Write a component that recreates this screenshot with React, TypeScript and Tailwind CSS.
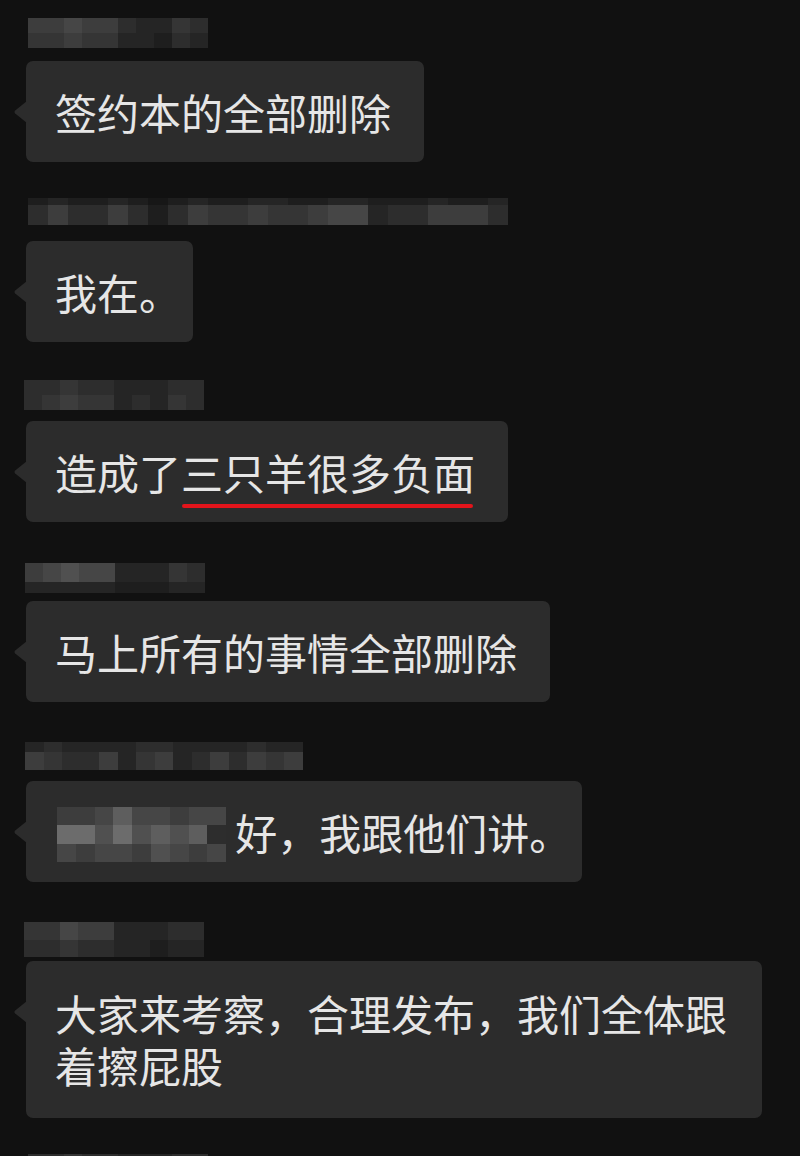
import React from "react";

// grey steps for the blurred name bars
const SHADES = [
  "bg-[#171717]",
  "bg-[#1e1e1e]",
  "bg-[#252525]",
  "bg-[#2d2d2d]",
  "bg-[#353535]",
  "bg-[#3d3d3d]",
  "bg-[#464646]",
  "bg-[#505050]",
  "bg-[#5e5e5e]",
  "bg-[#6c6c6c]",
];

type Row = { h: string; cells: string };

const Mosaic: React.FC<{ rows: Row[]; cellW: string; className?: string }> = ({
  rows,
  cellW,
  className = "",
}) => (
  <div className={`flex flex-col ${className}`}>
    {rows.map((row, i) => (
      <div key={i} className="flex">
        {row.cells.split("").map((c, j) => (
          <div key={j} className={`${cellW} ${row.h} ${SHADES[Number(c)]}`} />
        ))}
      </div>
    ))}
  </div>
);

const Tail = () => (
  <svg
    className="absolute -left-[13px] top-[40px] h-[22px] w-[14px]"
    viewBox="0 0 14 22"
  >
    <path d="M14 0 L2.2 9.6 Q0.6 11 2.2 12.4 L14 22 Z" fill="#2c2c2c" />
  </svg>
);

const Bubble: React.FC<{
  children: React.ReactNode;
  pad?: string;
  py?: string;
  size?: string;
}> = ({ children, pad = "pl-[29px] pr-[33px]", py = "pt-[26px] pb-[25px]", size = "" }) => (
  <div
    className={`relative ml-[26px] rounded-[7px] bg-[#2c2c2c] text-[42px] leading-[50px] ${py} ${pad} ${size}`}
  >
    <Tail />
    {children}
  </div>
);

const Block: React.FC<{ name: React.ReactNode; children: React.ReactNode }> = ({
  name,
  children,
}) => (
  <div className="mb-[36px] flex flex-col items-start">
    <div className="h-[43px]">{name}</div>
    {children}
  </div>
);

export default function App() {
  return (
    <div className="h-[1156px] overflow-hidden bg-[#111111] font-['Noto_Sans_CJK_SC','Noto_Sans',sans-serif] text-[#e6e6e6]">
      <div className="flex flex-col items-start pt-[18px]">
        <Block
          name={
            <Mosaic
              className="ml-[28px]"
              cellW="w-[18px]"
              rows={[
                { h: "h-[15px]", cells: "5565532243" },
                { h: "h-[15px]", cells: "4454422132" },
              ]}
            />
          }
        >
          <Bubble>签约本的全部删除</Bubble>
        </Block>

        <Block
          name={
            <Mosaic
              className="ml-[28px]"
              cellW="w-[20px]"
              rows={[
                { h: "h-[7px]", cells: "121121012112211221112112" },
                { h: "h-[20px]", cells: "353353135445445662335553" },
              ]}
            />
          }
        >
          <Bubble pad="pl-[29px] pr-[12px]">我在。</Bubble>
        </Block>

        <Block
          name={
            <Mosaic
              className="ml-[24px] mt-[2px]"
              cellW="w-[18px]"
              rows={[
                { h: "h-[15px]", cells: "3343322233" },
                { h: "h-[15px]", cells: "3454423243" },
              ]}
            />
          }
        >
          <Bubble>
            造成了
            <span className="relative">
              三只羊很多负面
              <span className="absolute left-[1px] right-[2px] -bottom-[6px] h-[4px] rounded-full bg-[#e3141b]" />
            </span>
          </Bubble>
        </Block>

        <Block
          name={
            <Mosaic
              className="ml-[25px] mt-[5px]"
              cellW="w-[18px]"
              rows={[
                { h: "h-[19px]", cells: "5676622243" },
                { h: "h-[11px]", cells: "2222211122" },
              ]}
            />
          }
        >
          <Bubble>马上所有的事情全部删除</Bubble>
        </Block>

        <Block
          name={
            <Mosaic
              className="ml-[25px] mt-[4px]"
              cellW="w-[18.5px]"
              rows={[
                { h: "h-[10px]", cells: "232222332222322" },
                { h: "h-[18px]", cells: "543352452353545" },
              ]}
            />
          }
        >
          <Bubble pad="pl-[31px] pr-[11px]" py="pt-[26px] pb-[20px]">
            <div className="flex items-start">
              <Mosaic
                cellW="w-[18.8px]"
                rows={[
                  { h: "h-[18px]", cells: "556866566" },
                  { h: "h-[19px]", cells: "997978783" },
                  { h: "h-[18px]", cells: "656657656" },
                ]}
              />
              <span className="ml-[9px]">好，我跟他们讲。</span>
            </div>
          </Bubble>
        </Block>

        <Block
          name={
            <Mosaic
              className="ml-[24px] mt-[4px]"
              cellW="w-[18px]"
              rows={[
                { h: "h-[18px]", cells: "4465522233" },
                { h: "h-[17px]", cells: "3343322122" },
              ]}
            />
          }
        >
          <Bubble
            pad="pl-[29px] pr-[27px]"
            py="pt-[26px] pb-[27px]"
            size="w-[736px] leading-[52px]"
          >
            大家来考察，合理发布，我们全体跟着擦屁股
          </Bubble>
        </Block>

        <Mosaic
          className="ml-[28px]"
          cellW="w-[18px]"
          rows={[{ h: "h-[15px]", cells: "3343322233" }]}
        />
      </div>
    </div>
  );
}
